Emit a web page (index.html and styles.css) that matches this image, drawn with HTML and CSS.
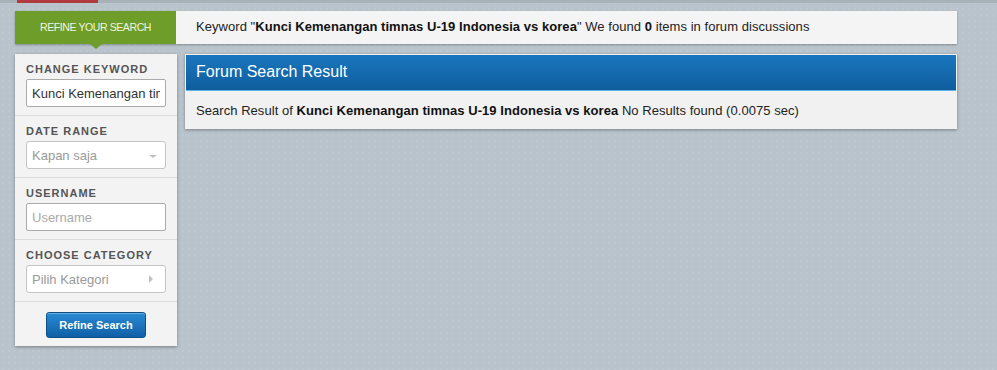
FILE: index.html
```html
<!DOCTYPE html>
<html lang="en">
<head>
  <meta charset="UTF-8" />
  <title>Search - Forum</title>
  <link rel="stylesheet" href="styles.css">
</head>
<body>
  <div class="topbar">
    <span class="topbar-logo"></span>
  </div>

  <div class="page">
    <div class="search-bar">
      <div class="refine-tab">REFINE YOUR SEARCH</div>
      <div class="search-summary">
        Keyword "<b>Kunci Kemenangan timnas U-19 Indonesia vs korea</b>" We found <b>0</b> items in forum discussions
      </div>
    </div>

    <div class="content">
      <form class="sidebar">
        <div class="field">
          <label>CHANGE KEYWORD</label>
          <input type="text" class="box" value="Kunci Kemenangan timnas U-19 Indonesia vs korea">
        </div>
        <div class="field">
          <label>DATE RANGE</label>
          <div class="box select">Kapan saja <span class="caret-down"></span></div>
        </div>
        <div class="field">
          <label>USERNAME</label>
          <input type="text" class="box" placeholder="Username">
        </div>
        <div class="field">
          <label>CHOOSE CATEGORY</label>
          <div class="box select">Pilih Kategori <span class="caret-right"></span></div>
        </div>
        <div class="field field-btn">
          <button type="button" class="refine-btn">Refine Search</button>
        </div>
      </form>

      <div class="result">
        <div class="result-head">Forum Search Result</div>
        <div class="result-body">
          Search Result of <b>Kunci Kemenangan timnas U-19 Indonesia vs korea</b> No Results found (0.0075 sec)
        </div>
      </div>
    </div>
  </div>
</body>
</html>
```

FILE: styles.css
```css
body {
  margin: 0;
  font-family: "Liberation Sans", Arial, sans-serif;
  font-size: 13px;
  color: #222;
  background-color: #b8c3cb;
  background-image: radial-gradient(rgba(255, 255, 255, 0.06) 1px, transparent 1px);
  background-size: 6px 6px;
  min-height: 370px;
}

.topbar {
  height: 3px;
  background: #a7b1b8;
  padding-left: 17px;
}

.topbar-logo {
  display: block;
  width: 81px;
  height: 3px;
  background: #b03a3e;
}

.page {
  width: 942px;
  margin-left: 15px;
  padding-top: 8px;
}

.search-bar {
  display: flex;
  height: 33px;
  background: #f4f4f4;
  box-shadow: 0 1px 2px rgba(0, 0, 0, 0.3);
}

.refine-tab {
  position: relative;
  width: 161px;
  background: #6f9d2a;
  color: #eef5e2;
  font-size: 10.5px;
  line-height: 33px;
  text-align: center;
  letter-spacing: -0.4px;
}

.refine-tab:after {
  content: "";
  position: absolute;
  left: 75px;
  bottom: -5px;
  border-left: 6px solid transparent;
  border-right: 6px solid transparent;
  border-top: 5px solid #6f9d2a;
}

.search-summary {
  padding-left: 20px;
  line-height: 32px;
  font-size: 13px;
  letter-spacing: 0.05px;
  color: #222;
}

.search-summary b,
.result-body b {
  color: #111;
}

.content {
  display: flex;
  align-items: flex-start;
  gap: 8px;
  margin-top: 10px;
}

.sidebar {
  width: 162px;
  margin: 0;
  background: #f3f3f3;
  box-shadow: 0 1px 3px rgba(0, 0, 0, 0.35);
}

.field {
  padding: 9px 11px 8px 11px;
  border-bottom: 1px solid #dcdcdc;
}

.field label {
  display: block;
  font-size: 11px;
  font-weight: bold;
  letter-spacing: 1px;
  color: #555;
  line-height: 12px;
  margin-bottom: 4px;
}

.box {
  display: block;
  box-sizing: border-box;
  width: 140px;
  height: 28px;
  margin: 0;
  padding: 0 5px;
  border: 1px solid #aaa;
  border-radius: 2px;
  background: #fff;
  font-family: "Liberation Sans", Arial, sans-serif;
  font-size: 13px;
  color: #333;
  outline: none;
}

.box::placeholder {
  color: #aaa;
}

.select {
  position: relative;
  line-height: 27px;
  color: #9a9a9a;
  border-color: #c4c4c4;
  border-radius: 3px;
}

.caret-down {
  position: absolute;
  right: 8px;
  top: 13px;
  border-left: 4px solid transparent;
  border-right: 4px solid transparent;
  border-top: 3px solid #c2c2c2;
}

.caret-right {
  position: absolute;
  right: 12px;
  top: 9px;
  border-top: 4px solid transparent;
  border-bottom: 4px solid transparent;
  border-left: 4px solid #c2c2c2;
}

.field-btn {
  border-bottom: none;
  text-align: center;
  padding: 10px 0 8px 0;
}

.refine-btn {
  width: 100px;
  height: 26px;
  border: 1px solid #0c4f86;
  border-radius: 3px;
  background: linear-gradient(#2a8ad3, #0f60a6);
  color: #fff;
  font-family: "Liberation Sans", Arial, sans-serif;
  font-size: 11px;
  font-weight: bold;
  cursor: pointer;
  box-shadow: inset 0 1px 0 rgba(255, 255, 255, 0.3);
}

.result {
  flex: 1;
  background: #f1f1f1;
  box-shadow: 0 1px 3px rgba(0, 0, 0, 0.35);
}

.result-head {
  height: 35px;
  margin: 1px 1px 0 1px;
  padding-left: 10px;
  line-height: 34px;
  font-size: 16px;
  color: #fff;
  background: linear-gradient(#1a76bd, #0f5e9e);
  border-bottom: 1px solid #5fb0e4;
}

.result-body {
  padding: 2px 11px 0 11px;
  height: 36px;
  line-height: 36px;
  font-size: 13px;
  letter-spacing: 0.05px;
  color: #222;
}
```
